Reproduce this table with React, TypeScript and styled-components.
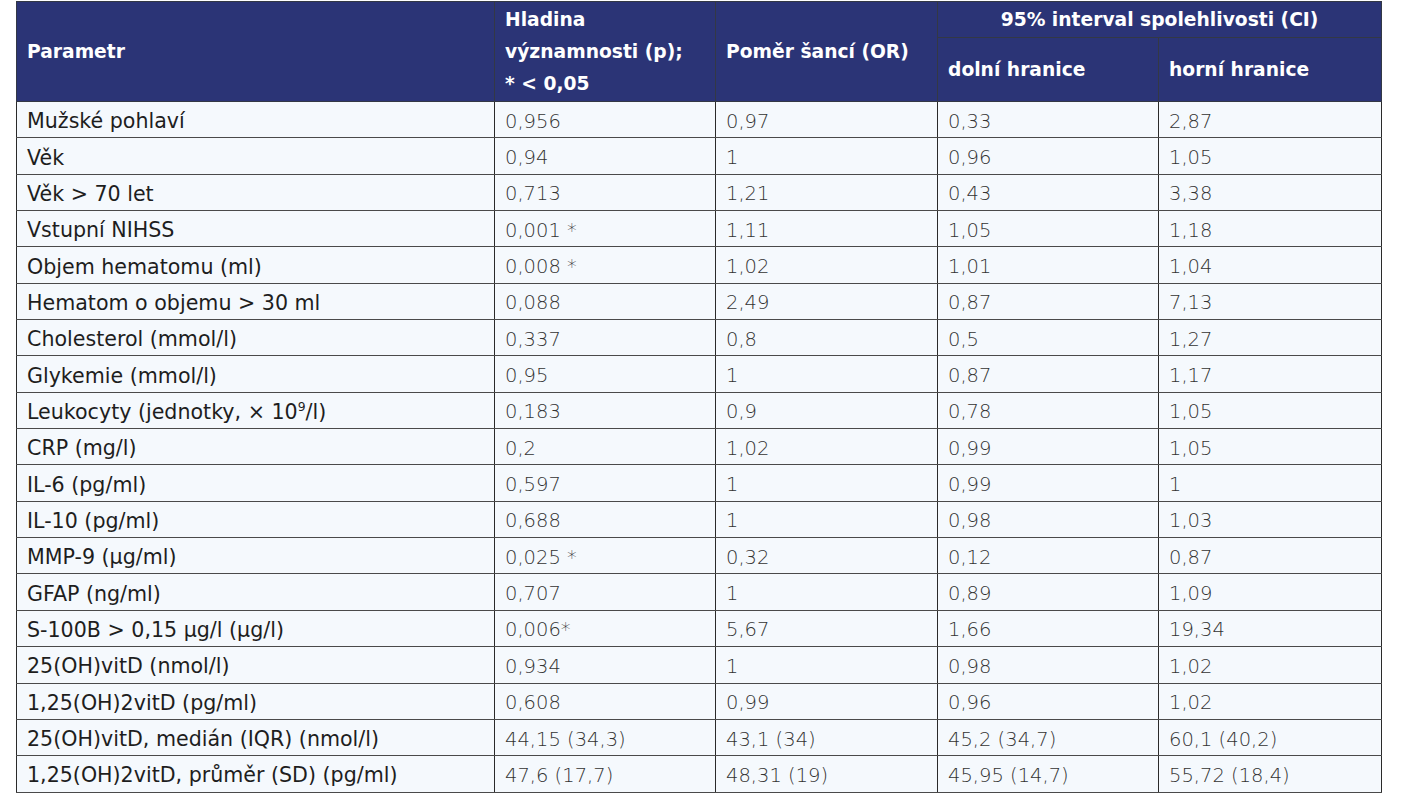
import React from "react";
import styled, { createGlobalStyle } from "styled-components";

const Global = createGlobalStyle`
  html, body { margin: 0; padding: 0; background: #ffffff; }
  body { font-family: "DejaVu Sans", "Liberation Sans", sans-serif; }
`;

const Page = styled.div`
  padding: 1px 0 0 16px;
`;

const Table = styled.table`
  border-collapse: collapse;
  table-layout: fixed;
  width: 1365px;
`;

const Th = styled.th<{ $center?: boolean }>`
  background: #2b3476;
  color: #ffffff;
  font-family: "DejaVu Sans", "Liberation Sans", sans-serif;
  font-size: 18.7px;
  font-weight: 700;
  text-align: ${(p) => (p.$center ? "center" : "left")};
  vertical-align: middle;
  padding: 1px 10px 0;
  line-height: 32px;
  border: 1px solid #333845;
`;

const Tr = styled.tr`
  height: 36.35px;
`;

const HeadTr = styled.tr<{ $h: number }>`
  height: ${(p) => p.$h}px;
`;

const Td = styled.td<{ $label?: boolean }>`
  background: #f5f9fd;
  color: ${(p) => (p.$label ? "#1e1e1e" : "#333333")};
  font-family: "DejaVu Sans", "Liberation Sans", sans-serif;
  font-size: ${(p) => (p.$label ? "20.6px" : "19.5px")};
  font-weight: ${(p) => (p.$label ? 400 : 200)};
  padding: 3px 10px 0;
  white-space: nowrap;
  border-top: 1px solid #4a4a4a;
  border-bottom: 1px solid #4a4a4a;
  border-left: 1px solid #2a2a2a;
  border-right: 1px solid #2a2a2a;
`;

const Sup = styled.sup`
  font-size: 0.6em;
  line-height: 0;
`;

const rows: [React.ReactNode, string, string, string, string][] = [
  ["Mužské pohlaví", "0,956", "0,97", "0,33", "2,87"],
  ["Věk", "0,94", "1", "0,96", "1,05"],
  ["Věk > 70 let", "0,713", "1,21", "0,43", "3,38"],
  ["Vstupní NIHSS", "0,001 *", "1,11", "1,05", "1,18"],
  ["Objem hematomu (ml)", "0,008 *", "1,02", "1,01", "1,04"],
  ["Hematom o objemu > 30 ml", "0,088", "2,49", "0,87", "7,13"],
  ["Cholesterol (mmol/l)", "0,337", "0,8", "0,5", "1,27"],
  ["Glykemie (mmol/l)", "0,95", "1", "0,87", "1,17"],
  [
    <>
      Leukocyty (jednotky, × 10<Sup>9</Sup>/l)
    </>,
    "0,183",
    "0,9",
    "0,78",
    "1,05",
  ],
  ["CRP (mg/l)", "0,2", "1,02", "0,99", "1,05"],
  ["IL-6 (pg/ml)", "0,597", "1", "0,99", "1"],
  ["IL-10 (pg/ml)", "0,688", "1", "0,98", "1,03"],
  ["MMP-9 (μg/ml)", "0,025 *", "0,32", "0,12", "0,87"],
  ["GFAP (ng/ml)", "0,707", "1", "0,89", "1,09"],
  ["S-100B > 0,15 μg/l (μg/l)", "0,006*", "5,67", "1,66", "19,34"],
  ["25(OH)vitD (nmol/l)", "0,934", "1", "0,98", "1,02"],
  ["1,25(OH)2vitD (pg/ml)", "0,608", "0,99", "0,96", "1,02"],
  ["25(OH)vitD, medián (IQR) (nmol/l)", "44,15 (34,3)", "43,1 (34)", "45,2 (34,7)", "60,1 (40,2)"],
  ["1,25(OH)2vitD, průměr (SD) (pg/ml)", "47,6 (17,7)", "48,31 (19)", "45,95 (14,7)", "55,72 (18,4)"],
];

export default function App() {
  return (
    <Page>
      <Global />
      <Table>
        <colgroup>
          <col style={{ width: 478 }} />
          <col style={{ width: 221 }} />
          <col style={{ width: 222 }} />
          <col style={{ width: 221 }} />
          <col style={{ width: 223 }} />
        </colgroup>
        <thead>
          <HeadTr $h={36}>
            <Th rowSpan={2}>Parametr</Th>
            <Th rowSpan={2}>
              Hladina
              <br />
              významnosti (p);
              <br />* &lt; 0,05
            </Th>
            <Th rowSpan={2}>Poměr šancí (OR)</Th>
            <Th colSpan={2} $center>
              95% interval spolehlivosti (CI)
            </Th>
          </HeadTr>
          <HeadTr $h={64}>
            <Th>dolní hranice</Th>
            <Th>horní hranice</Th>
          </HeadTr>
        </thead>
        <tbody>
          {rows.map((r, i) => (
            <Tr key={i}>
              <Td $label>{r[0]}</Td>
              <Td>{r[1]}</Td>
              <Td>{r[2]}</Td>
              <Td>{r[3]}</Td>
              <Td>{r[4]}</Td>
            </Tr>
          ))}
        </tbody>
      </Table>
    </Page>
  );
}
